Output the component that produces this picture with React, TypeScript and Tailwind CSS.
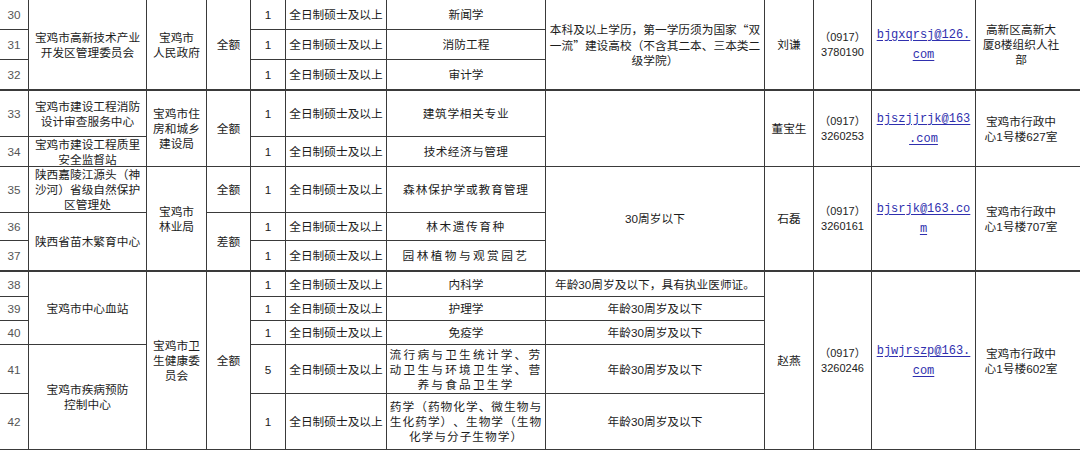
import type { ReactNode } from "react";

// literal class lookups so Tailwind sees every name
const COL_START = ["", "col-start-1", "col-start-2", "col-start-3", "col-start-4", "col-start-5", "col-start-6", "col-start-7", "col-start-8", "col-start-9", "col-start-10", "col-start-11", "col-start-12"];
const ROW_START = ["", "row-start-1", "row-start-2", "row-start-3", "row-start-4", "row-start-5", "row-start-6", "row-start-7", "row-start-8", "row-start-9", "row-start-10", "row-start-11", "row-start-12", "row-start-13"];
const ROW_SPAN = ["", "row-span-1", "row-span-2", "row-span-3", "row-span-4", "row-span-5"];

interface Cell {
  col: number;
  row: number;
  span?: number;
  content: ReactNode;
  className?: string;
}

const MAJORS: { text: ReactNode; className?: string }[] = [
  { text: "新闻学" },
  { text: "消防工程" },
  { text: "审计学" },
  { text: "建筑学相关专业", className: "tracking-[0.7px]" },
  { text: "技术经济与管理", className: "tracking-[0.4px]" },
  { text: "森林保护学或教育管理", className: "tracking-[0.9px]" },
  { text: "林木遗传育种", className: "tracking-[1.6px]" },
  { text: "园林植物与观赏园艺", className: "tracking-[2.4px]" },
  { text: "内科学" },
  { text: "护理学" },
  { text: "免疫学" },
  {
    text: (
      <>
        流行病与卫生统计学、劳
        <br />
        动卫生与环境卫生学、营
        <br />
        养与食品卫生学
      </>
    ),
    className: "tracking-[2.2px] leading-[14px]",
  },
  {
    text: (
      <>
        药学（药物化学、微生物与
        <br />
        生化药学）、生物学（生物
        <br />
        化学与分子生物学）
      </>
    ),
    className: "tracking-[1px] leading-[14.5px]",
  },
];

const phone = (num: string) => (
  <>
    （0917）
    <br />
    {num}
  </>
);

const email = (a: string, b: string) => (
  <span className="font-['Liberation_Mono',monospace] text-[12px] leading-[20px] text-[#2f2fae] underline underline-offset-2">
    {a}
    <br />
    {b}
  </span>
);

const quote = (q: string) => (
  <span className="font-['Noto_Sans_CJK_SC'] [font-feature-settings:'fwid']">{q}</span>
);

const cells: Cell[] = [
  // unit
  { col: 2, row: 1, span: 3, content: <>宝鸡市高新技术产业<br />开发区管理委员会</> },
  { col: 2, row: 4, content: <>宝鸡市建设工程消防<br />设计审查服务中心</> },
  { col: 2, row: 5, content: <>宝鸡市建设工程质里<br />安全监督站</> },
  { col: 2, row: 6, content: <>陕西嘉陵江源头（神<br />沙河）省级自然保护<br />区管理处</> },
  { col: 2, row: 7, span: 2, content: "陕西省苗木繁育中心" },
  { col: 2, row: 9, span: 3, content: "宝鸡市中心血站" },
  { col: 2, row: 12, span: 2, content: <>宝鸡市疾病预防<br />控制中心</> },
  // department
  { col: 3, row: 1, span: 3, content: <>宝鸡市<br />人民政府</> },
  { col: 3, row: 4, span: 2, content: <>宝鸡市住<br />房和城乡<br />建设局</> },
  { col: 3, row: 6, span: 3, content: <>宝鸡市<br />林业局</> },
  { col: 3, row: 9, span: 5, content: <>宝鸡市卫<br />生健康委<br />员会</>, className: "leading-[14px]" },
  // funding
  { col: 4, row: 1, span: 3, content: "全额" },
  { col: 4, row: 4, span: 2, content: "全额" },
  { col: 4, row: 6, content: "全额" },
  { col: 4, row: 7, span: 2, content: "差额" },
  { col: 4, row: 9, span: 5, content: "全额" },
  // requirements
  {
    col: 8,
    row: 1,
    span: 3,
    content: (
      <>
        本科及以上学历，第一学历须为国家{quote("“")}双
        <br />
        一流{quote("”")}建设高校（不含其二本、三本类二
        <br />
        级学院）
      </>
    ),
  },
  { col: 8, row: 4, span: 2, content: "" },
  { col: 8, row: 6, span: 3, content: "30周岁以下" },
  { col: 8, row: 9, content: "年龄30周岁及以下，具有执业医师证。" },
  { col: 8, row: 10, content: "年龄30周岁及以下" },
  { col: 8, row: 11, content: "年龄30周岁及以下" },
  { col: 8, row: 12, content: "年龄30周岁及以下" },
  { col: 8, row: 13, content: "年龄30周岁及以下" },
  // contact person
  { col: 9, row: 1, span: 3, content: "刘谦" },
  { col: 9, row: 4, span: 2, content: "董宝生" },
  { col: 9, row: 6, span: 3, content: "石磊" },
  { col: 9, row: 9, span: 5, content: "赵燕" },
  // phone
  { col: 10, row: 1, span: 3, content: phone("3780190"), className: "text-[11px]" },
  { col: 10, row: 4, span: 2, content: phone("3260253"), className: "text-[11px]" },
  { col: 10, row: 6, span: 3, content: phone("3260161"), className: "text-[11px]" },
  { col: 10, row: 9, span: 5, content: phone("3260246"), className: "text-[11px]" },
  // email
  { col: 11, row: 1, span: 3, content: email("bjgxqrsj@126.", "com") },
  { col: 11, row: 4, span: 2, content: email("bjszjjrjk@163", ".com") },
  { col: 11, row: 6, span: 3, content: email("bjsrjk@163.co", "m") },
  { col: 11, row: 9, span: 5, content: email("bjwjrszp@163.", "com") },
  // address
  { col: 12, row: 1, span: 3, content: <>高新区高新大<br />厦8楼组织人社<br />部</> },
  { col: 12, row: 4, span: 2, content: <>宝鸡市行政中<br />心1号楼627室</> },
  { col: 12, row: 6, span: 3, content: <>宝鸡市行政中<br />心1号楼707室</> },
  { col: 12, row: 9, span: 5, content: <>宝鸡市行政中<br />心1号楼602室</> },
];

// per-row cells: number, headcount, degree, major
for (let i = 0; i < 13; i++) {
  const row = i + 1;
  cells.push({ col: 1, row, content: String(30 + i), className: "text-[#555]" });
  cells.push({ col: 5, row, content: row === 12 ? "5" : "1" });
  cells.push({ col: 6, row, content: "全日制硕士及以上" });
  cells.push({ col: 7, row, content: MAJORS[i].text, className: MAJORS[i].className });
}

export default function App() {
  return (
    <div className="h-[452px] w-[1080px] overflow-hidden bg-white font-['Liberation_Sans','Noto_Sans_CJK_SC',sans-serif] text-[11.7px] text-[#1c1c1c] [text-spacing-trim:space-all]">
      <div className="grid h-[450px] grid-cols-[29px_118px_60px_44px_35px_101px_159px_219px_49px_58px_104px_104px] grid-rows-[30px_30px_31px_46px_30px_46px_28px_31px_25px_24px_24px_49px_56px]">
        {cells.map((cell, idx) => {
          const span = cell.span ?? 1;
          const end = cell.row + span - 1;
          const thick = end === 3 || end === 8;
          return (
            <div
              key={idx}
              className={[
                COL_START[cell.col],
                ROW_START[cell.row],
                ROW_SPAN[span],
                "flex items-center justify-center whitespace-nowrap border-[#3a3a3a] text-center leading-[15px]",
                thick ? "border-b-2" : "border-b",
                cell.col === 12 ? "pr-[14px]" : "border-r",
                cell.className ?? "",
              ].join(" ")}
            >
              <div>{cell.content}</div>
            </div>
          );
        })}
      </div>
    </div>
  );
}
